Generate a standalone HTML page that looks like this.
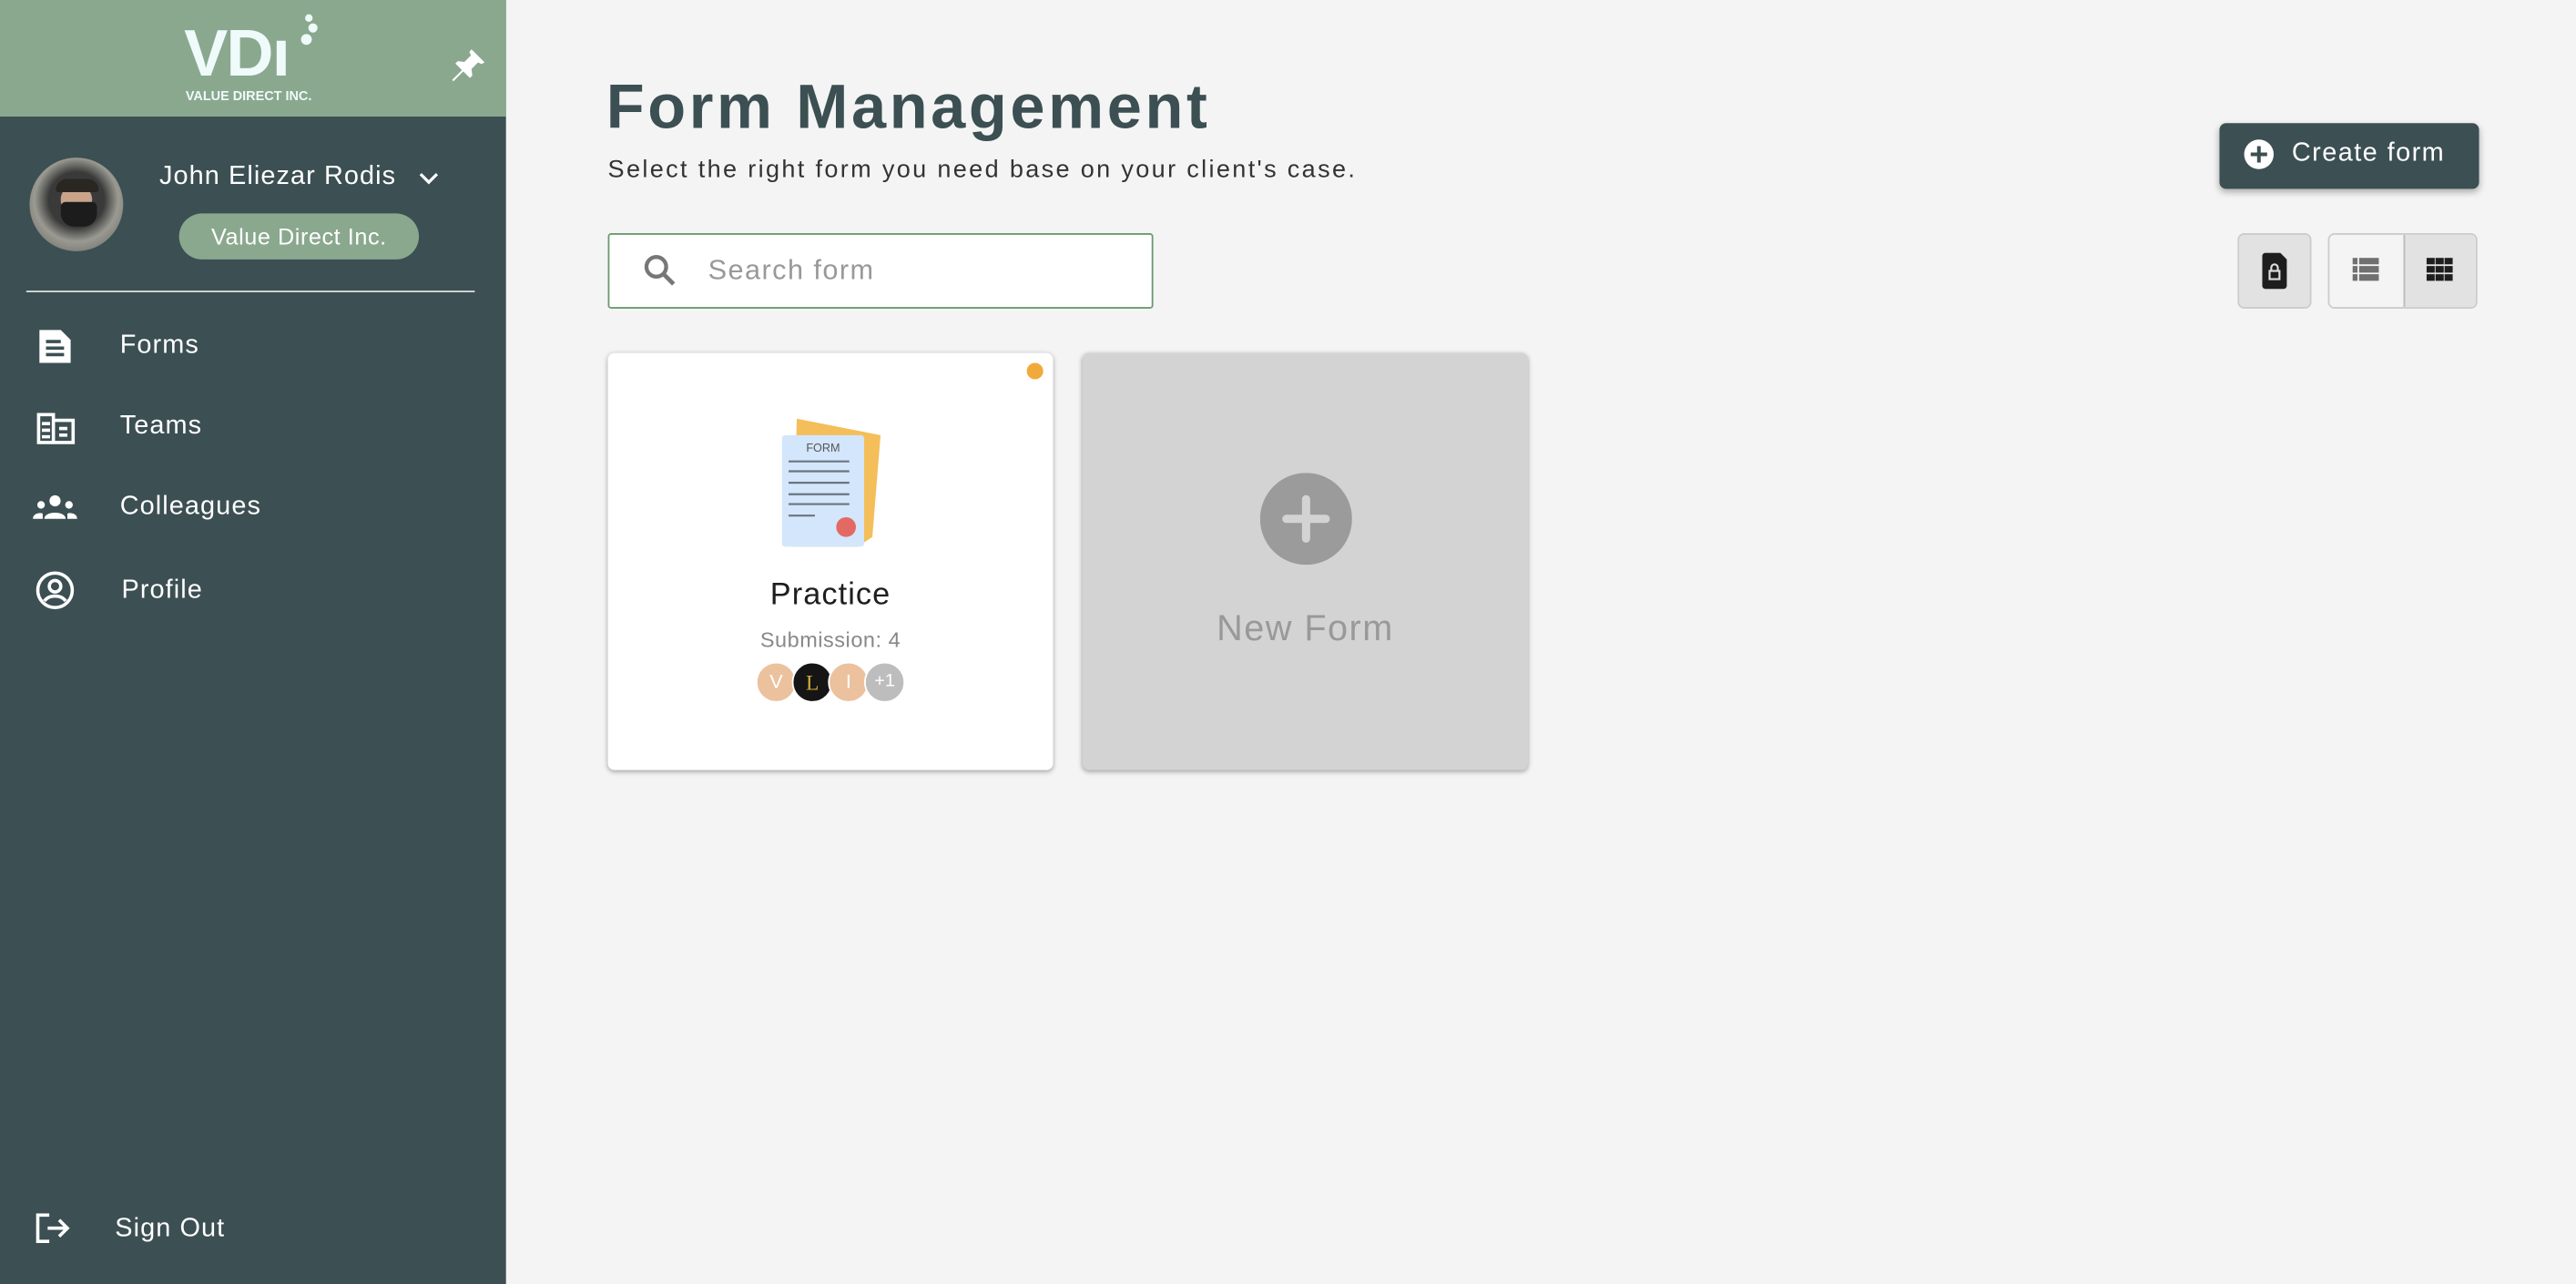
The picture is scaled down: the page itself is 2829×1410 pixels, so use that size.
<!DOCTYPE html>
<html><head><meta charset="utf-8"><style>
*{margin:0;padding:0;box-sizing:border-box}
html,body{width:2829px;height:1410px;overflow:hidden;background:#f4f4f4;font-family:"Liberation Sans",sans-serif}
#w{position:absolute;left:0;top:0;width:1568px;height:782px;transform:scale(1.8042,1.8031);transform-origin:0 0}
.a{position:absolute}
.sb{left:0;top:0;width:308px;height:782px;background:#3c4f53}
.hd{left:0;top:0;width:308px;height:71px;background:#8aa88e}
.nav{color:#fff;font-size:16px;letter-spacing:.6px}
.t{white-space:nowrap}
</style></head><body><div id="w">
<div class="a sb"></div>
<div class="a hd"></div>
<div class="a t" style="left:112px;top:11px;font-size:40px;font-weight:bold;color:#effafa;letter-spacing:-1px;line-height:44px">VDı</div>
<svg class="a" style="left:172px;top:7px" width="22" height="24"><circle cx="16" cy="4" r="2.3" fill="#effafa"/><circle cx="18.5" cy="10" r="2.8" fill="#effafa"/><circle cx="14.5" cy="17" r="3.3" fill="#effafa"/></svg>
<div class="a t" style="left:113px;top:54px;font-size:8px;font-weight:bold;color:#effafa">VALUE DIRECT INC.</div>
<svg class="a" style="left:272px;top:28px" width="26" height="24" viewBox="0 0 24 24"><path d="M14 2l8 8-2 1-2-1-4 4 .5 4-1.5 1.5-4-4-6 6-.8-.8 6-6-4-4L5.7 9.2 9.7 9.7l4-4-1-2z" fill="#fff"/></svg>
<div class="a" style="left:18px;top:96px;width:57px;height:57px;border-radius:50%;background:radial-gradient(circle at 50% 45%,#c9a48a 0 22%,#3a3a3a 23% 40%,#9a9a92 60%,#5a5a55 100%);overflow:hidden"><div class="a" style="left:19px;top:27px;width:22px;height:15px;background:#1c1c1c;border-radius:3px 3px 8px 8px"></div><div class="a" style="left:16px;top:13px;width:26px;height:8px;background:#2a2622;border-radius:10px 10px 2px 2px"></div></div>
<div class="a t nav" style="left:97px;top:99px;font-size:16px">John Eliezar Rodis</div>
<svg class="a" style="left:255px;top:104px" width="12" height="10"><path d="M1 2l5 5 5-5" stroke="#fff" stroke-width="1.8" fill="none"/></svg>
<div class="a t" style="left:109px;top:130px;width:146px;height:28px;border-radius:14px;background:#8aa88e;color:#fff;font-size:14px;line-height:28px;text-align:center;letter-spacing:.3px">Value Direct Inc.</div>
<div class="a" style="left:16px;top:177px;width:273px;height:1px;background:#ddd"></div>
<svg class="a" style="left:23px;top:200px" width="22" height="22" viewBox="0 0 22 22"><path d="M1 1h13l6 6v14H1z" fill="#fff"/><path d="M5 8h9M5 12h11M5 16h11" stroke="#3c4f53" stroke-width="2"/></svg>
<div class="a t nav" style="left:73px;top:202px">Forms</div>
<svg class="a" style="left:22px;top:249px" width="24" height="22" viewBox="0 0 24 22"><path d="M1.5 3.5h9v17h-9zM10.5 7h12v13.5h-12z" stroke="#fff" stroke-width="2" fill="none"/><path d="M3.5 9h5M3.5 13h5M3.5 17h5M14 12h5M14 16h5" stroke="#fff" stroke-width="2"/></svg>
<div class="a t nav" style="left:73px;top:251px">Teams</div>
<svg class="a" style="left:20px;top:301px" width="27" height="16" viewBox="0 0 27 16"><circle cx="13.5" cy="4" r="3.4" fill="#fff"/><circle cx="5" cy="6.5" r="2.3" fill="#fff"/><circle cx="22" cy="6.5" r="2.3" fill="#fff"/><path d="M7 15c0-5 13-5 13 0zM0 15c0-4 6-4 6-3v3zM27 15c0-4-6-4-6-3v3z" fill="#fff"/></svg>
<div class="a t nav" style="left:73px;top:300px">Colleagues</div>
<svg class="a" style="left:21px;top:347px" width="25" height="25" viewBox="0 0 25 25"><circle cx="12.5" cy="12.5" r="10.5" stroke="#fff" stroke-width="2" fill="none"/><circle cx="12.5" cy="10" r="3.5" stroke="#fff" stroke-width="2" fill="none"/><path d="M6 19c3-4 10-4 13 0" stroke="#fff" stroke-width="2" fill="none"/></svg>
<div class="a t nav" style="left:74px;top:351px">Profile</div>
<svg class="a" style="left:21px;top:738px" width="22" height="20" viewBox="0 0 22 20"><path d="M9 2H2v16h7" stroke="#fff" stroke-width="2" fill="none"/><path d="M8 10h12M15 5l5 5-5 5" stroke="#fff" stroke-width="2" fill="none"/></svg>
<div class="a t nav" style="left:70px;top:740px">Sign Out</div>

<div class="a t" style="left:369px;top:45px;font-size:38px;font-weight:bold;color:#3c4f53;letter-spacing:2px">Form Management</div>
<div class="a t" style="left:370px;top:95px;font-size:15px;color:#333;letter-spacing:1.3px">Select the right form you need base on your client's case.</div>
<div class="a" style="left:1351px;top:75px;width:158px;height:40px;background:#3c4f53;border-radius:4px;box-shadow:0 2px 4px rgba(0,0,0,.3)"></div>
<svg class="a" style="left:1365px;top:84px" width="20" height="20"><circle cx="10" cy="10" r="9" fill="#fff"/><path d="M10 5v10M5 10h10" stroke="#3c4f53" stroke-width="2.2"/></svg>
<div class="a t" style="left:1395px;top:85px;font-size:16px;color:#fff;letter-spacing:.8px">Create form</div>
<div class="a" style="left:370px;top:142px;width:332px;height:46px;background:#fff;border:1px solid #6a9a6e;border-radius:2px"></div>
<svg class="a" style="left:391px;top:154px" width="22" height="22" viewBox="0 0 22 22"><circle cx="8.5" cy="8.5" r="6" stroke="#777" stroke-width="2.4" fill="none"/><path d="M13 13l6 6" stroke="#777" stroke-width="2.6"/></svg>
<div class="a t" style="left:431px;top:155px;font-size:17px;color:#999;letter-spacing:.8px">Search form</div>
<div class="a" style="left:1362px;top:142px;width:45px;height:46px;background:#e2e2e2;border:1px solid #ccc;border-radius:4px"></div>
<svg class="a" style="left:1377px;top:154px" width="15" height="22" viewBox="0 0 15 22"><path d="M2 0h9l4 4v16a2 2 0 0 1-2 2H2a2 2 0 0 1-2-2V2a2 2 0 0 1 2-2z" fill="#1e1e1e"/><rect x="4.5" y="11" width="6" height="5" stroke="#ddd" stroke-width="1.2" fill="none"/><path d="M5.5 11V9a2 2 0 0 1 4 0v2" stroke="#ddd" stroke-width="1.2" fill="none"/></svg>
<div class="a" style="left:1417px;top:142px;width:91px;height:46px;background:#f4f4f4;border:1px solid #ccc;border-radius:4px;overflow:hidden"><div class="a" style="left:45px;top:0;width:46px;height:46px;background:#e2e2e2;border-left:1px solid #bbb"></div></div>
<svg class="a" style="left:1432px;top:157px" width="16" height="15"><path d="M0 0h3v4H0zM4 0h12v4H4zM0 5h3v4H0zM4 5h12v4H4zM0 10h3v4H0zM4 10h12v4H4z" fill="#707070"/></svg>
<svg class="a" style="left:1477px;top:157px" width="16" height="15"><path d="M0 0h5v4H0zM5.5 0h5v4h-5zM11 0h5v4h-5zM0 5h5v4H0zM5.5 5h5v4h-5zM11 5h5v4h-5zM0 10h5v4H0zM5.5 10h5v4h-5zM11 10h5v4h-5z" fill="#1e1e1e"/></svg>

<div class="a" style="left:370px;top:215px;width:271px;height:254px;background:#fff;border-radius:4px;box-shadow:0 1px 3px rgba(0,0,0,.35)"></div>
<div class="a" style="left:625px;top:221px;width:10px;height:10px;border-radius:50%;background:#f2a93b"></div>
<svg class="a" style="left:474px;top:255px" width="64" height="80" viewBox="0 0 64 80"><path d="M11 0L62 10 57 72 48 78H9z" fill="#f4be5a"/><rect x="2" y="10" width="50" height="68" rx="2" fill="#d3e6fb"/><text x="27" y="20" font-size="7" text-anchor="middle" fill="#555" font-family="Liberation Sans">FORM</text><path d="M6 26h37M6 32h37M6 39h37M6 46h37M6 52h37M6 59h16" stroke="#6b7580" stroke-width="1.2"/><circle cx="41" cy="66" r="6" fill="#e36a62"/></svg>
<div class="a t" style="left:370px;top:352px;width:271px;text-align:center;font-size:19px;color:#1e1e1e;letter-spacing:.6px">Practice</div>
<div class="a t" style="left:370px;top:382px;width:271px;text-align:center;font-size:13px;color:#888;letter-spacing:.3px">Submission: 4</div>
<div class="a" style="left:460px;top:403px;width:25px;height:25px;border-radius:50%;background:#ecc19e;border:1px solid #fff;color:#fff;font-size:12px;line-height:23px;text-align:center">V</div>
<div class="a" style="left:482px;top:403px;width:25px;height:25px;border-radius:50%;background:#151515;border:1px solid #fff;color:#d4aa3a;font-size:13px;line-height:23px;text-align:center;font-family:'Liberation Serif',serif">L</div>
<div class="a" style="left:504px;top:403px;width:25px;height:25px;border-radius:50%;background:#ecc19e;border:1px solid #fff;color:#fff;font-size:12px;line-height:23px;text-align:center">I</div>
<div class="a" style="left:526px;top:403px;width:25px;height:25px;border-radius:50%;background:#bdbdbd;border:1px solid #fff;color:#fff;font-size:11px;line-height:23px;text-align:center">+1</div>

<div class="a" style="left:659px;top:215px;width:271px;height:254px;background:#d3d3d3;border-radius:4px;box-shadow:0 1px 3px rgba(0,0,0,.35)"></div>
<svg class="a" style="left:767px;top:288px" width="56" height="56"><circle cx="28" cy="28" r="28" fill="#9b9b9b"/><path d="M28 16v24M16 28h24" stroke="#d3d3d3" stroke-width="5" stroke-linecap="round"/></svg>
<div class="a t" style="left:659px;top:370px;width:271px;text-align:center;font-size:22px;color:#999;letter-spacing:.8px">New Form</div>
</div></body></html>
